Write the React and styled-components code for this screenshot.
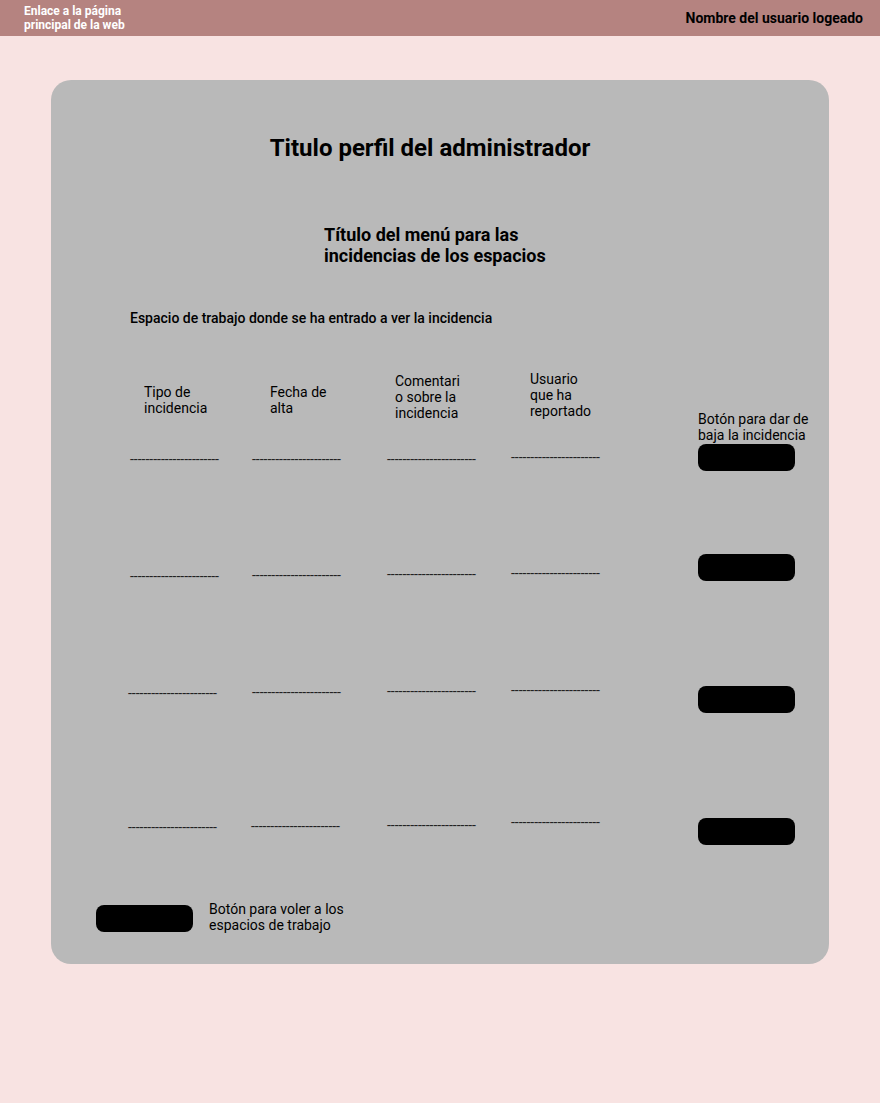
import React from 'react';
import styled, { createGlobalStyle } from 'styled-components';

const GlobalStyle = createGlobalStyle`
  body {
    margin: 0;
    background: #f8e3e2;
    font-family: Roboto, "Liberation Sans", sans-serif;
    color: #000;
  }
`

const Page = styled.div`
  min-height: 1103px;
  background: #f8e3e2;
`

const Header = styled.header`
  height: 36px;
  background: #b58380;
  display: flex;
  align-items: center;
  justify-content: space-between;
  padding: 0 17px 0 24px;
`

const HomeLink = styled.a`
  color: #fff;
  font-size: 12px;
  font-weight: 700;
  line-height: 14px;
  width: 110px;
  text-decoration: none;
`

const UserName = styled.span`
  font-size: 14px;
  font-weight: 700;
`

const Card = styled.main`
  margin: 44px 51px 0;
  height: 884px;
  box-sizing: border-box;
  background: #b9b9b9;
  border-radius: 20px;
  padding: 54px 0 0;
  display: flex;
  flex-direction: column;
`

const Title = styled.h1`
  margin: 0;
  text-align: center;
  font-size: 24px;
  line-height: 28px;
  font-weight: 700;
  padding-right: 20px;
`

const MenuTitle = styled.h2`
  margin: 62px 0 0 273px;
  font-size: 18px;
  line-height: 21px;
  font-weight: 700;
  width: 240px;
`

const Workspace = styled.p`
  margin: 44px 0 0 79px;
  font-size: 14px;
  font-weight: 500;
  line-height: 16px;
`

const HeadRow = styled.div`
  display: grid;
  grid-template-columns: 126px 125px 135px 168px 1fr;
  margin: 40px 0 0 93px;
  height: 77px;
`

const HeadCell = styled.div`
  font-size: 14px;
  line-height: 16px;
  align-self: ${p => p.$end ? 'end' : 'start'};
  margin-top: ${p => p.$top || 0}px;
  width: ${p => p.$w || 'auto'};
`

const Rows = styled.div`
  display: flex;
  flex-direction: column;
`

const Row = styled.div`
  display: grid;
  grid-template-columns: 122px 135px 124px 189px 1fr;
  align-items: center;
  margin: ${p => p.$gap}px 0 0 77px;
  height: 28px;
`

const Dashes = styled.span`
  font-size: 14px;
  line-height: 14px;
  color: #222;
  white-space: nowrap;
  margin-left: ${p => p.$x || 0}px;
  transform: translateY(${p => p.$y || 0}px);
`

const BlackButton = styled.button`
  width: 97px;
  height: 27px;
  background: #000;
  border: none;
  border-radius: 8px;
  padding: 0;
`

const Footer = styled.div`
  display: flex;
  align-items: center;
  gap: 16px;
  margin: 59px 0 0 45px;
`

const FooterText = styled.span`
  font-size: 14px;
  line-height: 16px;
  width: 140px;
  margin-top: -3px;
`

const rows = [
  { gap: 0, offs: [[2, 2], [2, 2], [2, 2], [2, 0]] },
  { gap: 82, offs: [[2, 9], [2, 8], [2, 7], [2, 6]] },
  { gap: 104, offs: [[0, -6], [2, -7], [2, -8], [2, -9]] },
  { gap: 104, offs: [[0, -4], [1, -5], [2, -6], [2, -9]] },
]

const DASH = '-----------------------'

export default function App() {
  return (
    <Page>
      <GlobalStyle />
      <Header>
        <HomeLink href="#">Enlace a la página principal de la web</HomeLink>
        <UserName>Nombre del usuario logeado</UserName>
      </Header>
      <Card>
        <Title>Titulo perfil del administrador</Title>
        <MenuTitle>Título del menú para las incidencias de los espacios</MenuTitle>
        <Workspace>Espacio de trabajo donde se ha entrado a ver la incidencia</Workspace>
        <HeadRow>
          <HeadCell $top={18}>Tipo de<br />incidencia</HeadCell>
          <HeadCell $top={18}>Fecha de<br />alta</HeadCell>
          <HeadCell $top={7} $w="70px">Comentari o sobre la incidencia</HeadCell>
          <HeadCell $top={5} $w="70px">Usuario que ha reportado</HeadCell>
          <HeadCell $end>Botón para dar de<br />baja la incidencia</HeadCell>
        </HeadRow>
        <Rows>
          {rows.map((r, i) => (
            <Row key={i} $gap={r.gap}>
              {r.offs.map(([x, y], j) => (
                <Dashes key={j} $x={x} $y={y}>{DASH}</Dashes>
              ))}
              <BlackButton aria-label="Dar de baja" />
            </Row>
          ))}
        </Rows>
        <Footer>
          <BlackButton aria-label="Volver" />
          <FooterText>Botón para voler a los espacios de trabajo</FooterText>
        </Footer>
      </Card>
    </Page>
  )
}
